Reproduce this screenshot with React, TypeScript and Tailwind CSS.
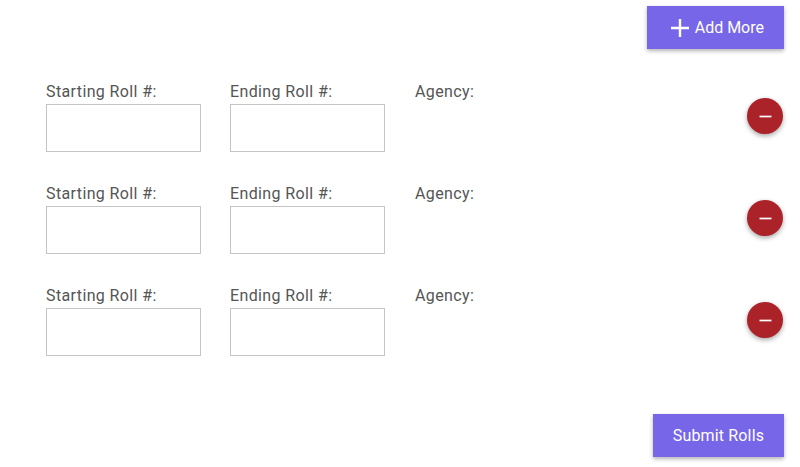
function RollRow() {
  return (
    <div className="flex h-[102px] items-start">
      <div className="w-[184px]">
        <div className="h-[23px] text-[16px] leading-[21px] tracking-[0.38px] text-[#555]">Starting Roll #:</div>
        <input className="block h-[48px] w-[155px] border border-[#c4c4c4] bg-white" />
      </div>
      <div className="w-[185px]">
        <div className="h-[23px] text-[16px] leading-[21px] tracking-[0.38px] text-[#555]">Ending Roll #:</div>
        <input className="block h-[48px] w-[155px] border border-[#c4c4c4] bg-white" />
      </div>
      <div className="h-[23px] flex-1 text-[16px] leading-[21px] tracking-[0.38px] text-[#555]">Agency:</div>
      <button className="mt-[17px] mr-[1px] flex h-[36px] w-[36px] items-center justify-center rounded-full bg-[#ab2328] text-white shadow-[0_2px_5px_rgba(0,0,0,0.35)]">
        <svg width="13" height="13" viewBox="0 0 13 13" fill="none" stroke="currentColor" strokeWidth="1.7">
          <path d="M0.5 6.5h12" />
        </svg>
      </button>
    </div>
  );
}

export default function App() {
  return (
    <div className="h-[467px] w-[800px] overflow-hidden bg-white px-[16px] pt-[6px] font-['Roboto',sans-serif]">
      <div className="flex justify-end">
        <button className="flex h-[43px] w-[137px] items-center justify-end gap-[6px] bg-[#7766e8] pr-[20px] text-[16px] text-white shadow-[0_2px_4px_rgba(0,0,0,0.3)]">
          <svg width="18" height="18" viewBox="0 0 18 18" fill="none" stroke="currentColor" strokeWidth="2.4">
            <path d="M9 0v18M0 9h18" />
          </svg>
          Add More
        </button>
      </div>
      <div className="mt-[32px] pl-[30px]">
        <RollRow />
        <RollRow />
        <RollRow />
      </div>
      <div className="mt-[27px] flex justify-end">
        <button className="h-[43px] w-[131px] bg-[#7766e8] text-[16px] tracking-[0.15px] text-white shadow-[0_2px_4px_rgba(0,0,0,0.3)]">
          Submit Rolls
        </button>
      </div>
    </div>
  );
}
